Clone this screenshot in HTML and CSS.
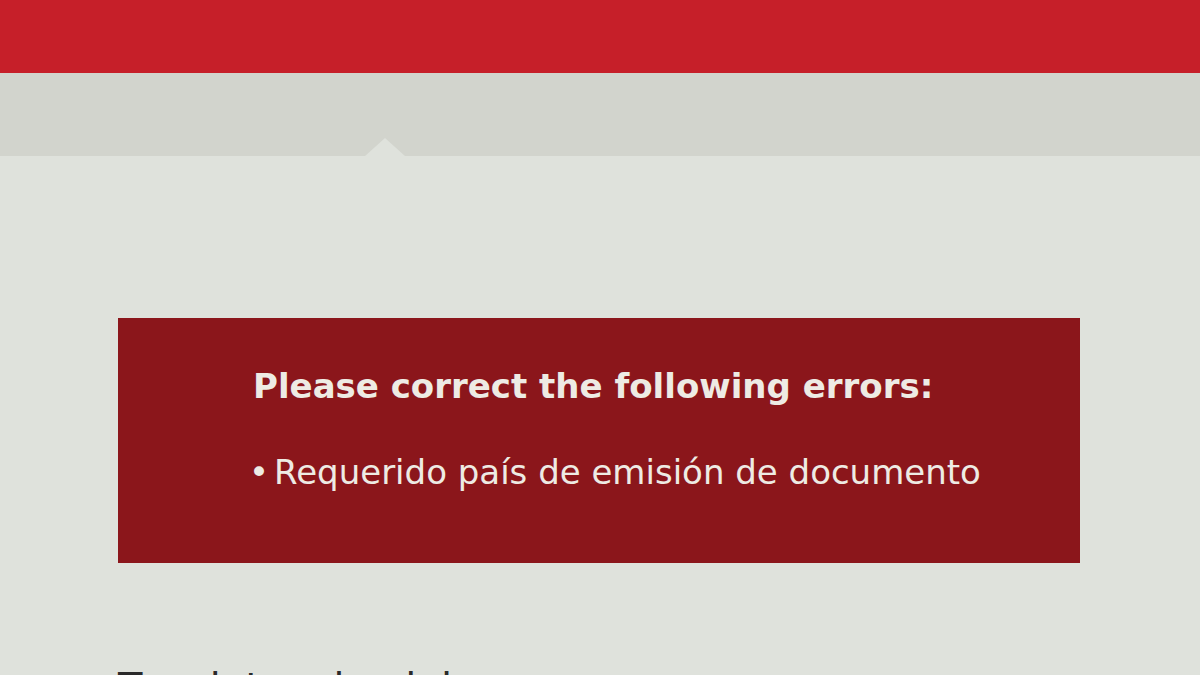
FILE: index.html
```html
<!DOCTYPE html>
<html lang="es">
<head>
<meta charset="utf-8">
<title>Errores</title>
<link rel="stylesheet" href="styles.css">
</head>
<body>
<header class="topbar"></header>
<nav class="subbar">
  <span class="notch"></span>
</nav>
<main class="content">
  <section class="error-box">
    <h2 class="error-title">Please correct the following errors:</h2>
    <ul class="error-list">
      <li>Requerido país de emisión de documento</li>
    </ul>
  </section>
  <h1 class="page-title">Tus datos de viaje</h1>
</main>
</body>
</html>
```
FILE: styles.css
```css
html, body {
  margin: 0;
  padding: 0;
}
body {
  width: 1200px;
  height: 675px;
  overflow: hidden;
  background: #dfe2dc;
  font-family: "DejaVu Sans", Verdana, sans-serif;
}
.topbar {
  height: 73px;
  background: #c61f29;
}
.subbar {
  height: 83px;
  background: #d2d4cd;
  position: relative;
}
.notch {
  position: absolute;
  left: 365px;
  bottom: 0;
  width: 0;
  height: 0;
  border-left: 20px solid transparent;
  border-right: 20px solid transparent;
  border-bottom: 18px solid #dfe2dc;
}
.content {
  padding: 162px 0 0 118px;
}
.error-box {
  width: 962px;
  height: 245px;
  box-sizing: border-box;
  background: #8b161b;
  padding: 48px 0 0 135px;
  color: #eeebe4;
}
.error-title {
  margin: 0;
  font-size: 34px;
  font-weight: bold;
  line-height: 40px;
}
.error-list {
  margin: 46px 0 0;
  padding: 0;
  list-style: none;
  font-size: 34px;
  line-height: 40px;
}
.error-list li::before {
  content: "•";
  margin-right: 5px;
  margin-left: -4px;
}
.page-title {
  margin: 102px 0 0;
  font-size: 40px;
  font-weight: normal;
  color: #2a2a2a;
}
```
